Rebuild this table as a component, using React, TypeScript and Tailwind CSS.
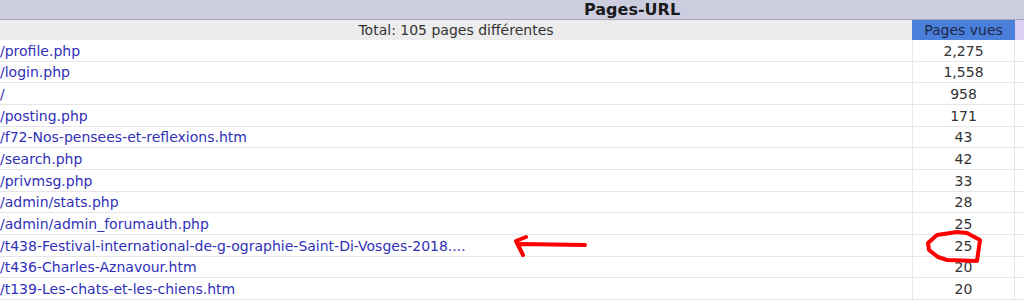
import React from "react";

interface PageRow {
  url: string;
  views: string;
}

const rows: PageRow[] = [
  { url: "/profile.php", views: "2,275" },
  { url: "/login.php", views: "1,558" },
  { url: "/", views: "958" },
  { url: "/posting.php", views: "171" },
  { url: "/f72-Nos-pensees-et-reflexions.htm", views: "43" },
  { url: "/search.php", views: "42" },
  { url: "/privmsg.php", views: "33" },
  { url: "/admin/stats.php", views: "28" },
  { url: "/admin/admin_forumauth.php", views: "25" },
  { url: "/t438-Festival-international-de-g-ographie-Saint-Di-Vosges-2018....", views: "25" },
  { url: "/t436-Charles-Aznavour.htm", views: "20" },
  { url: "/t139-Les-chats-et-les-chiens.htm", views: "20" },
];

export default function App() {
  return (
    <div className="relative w-[1024px] h-[304px] overflow-hidden bg-white font-['DejaVu_Sans',Verdana,sans-serif] text-[14px] text-[#333]">
      {/* Title bar */}
      <div className="h-[20px] bg-[#cdcde0] border-b border-[#a8a8b8] flex items-center pl-[584px]">
        <span className="font-bold text-[16px] leading-none text-[#1a1a1a]">Pages-URL</span>
      </div>

      {/* Sub header */}
      <div className="flex h-[20px] bg-[#ececec] leading-none">
        <div className="w-[912px] flex items-center justify-center text-[#333]">
          Total: 105 pages différentes
        </div>
        <div className="w-[103px] bg-[#4a7fdc] flex items-center justify-center text-[#1e2a44]">
          Pages vues
        </div>
        <div className="flex-1 bg-[#d9d0f2]" />
      </div>

      {/* Rows */}
      {rows.map((row, i) => (
        <div key={i} className="flex h-[21.67px] border-b border-[#e6e6e6] leading-none">
          <div className="w-[912px] flex items-center pt-[1px] text-[#3030b8] whitespace-nowrap overflow-hidden">
            {row.url}
          </div>
          <div className="w-[103px] flex items-center justify-center pt-[1px] border-l border-r border-[#e6e6e6]">
            {row.views}
          </div>
          <div className="flex-1" />
        </div>
      ))}

      {/* Red annotations */}
      <svg
        className="absolute left-0 top-0 pointer-events-none"
        width="1024"
        height="304"
        viewBox="0 0 1024 304"
        fill="none"
      >
        <path
          d="M520 244 L585 245 M516 241 L526 237 M516 241 L523 255"
          stroke="#f00"
          strokeWidth="4"
          strokeLinecap="round"
          strokeLinejoin="round"
        />
        <path
          d="M937 235 L957 232 L967 233 L980 240 L977 261 L947 260 L938 257 L929 250 L928 243 Z"
          stroke="#f00"
          strokeWidth="4"
          strokeLinejoin="round"
        />
      </svg>
    </div>
  );
}
